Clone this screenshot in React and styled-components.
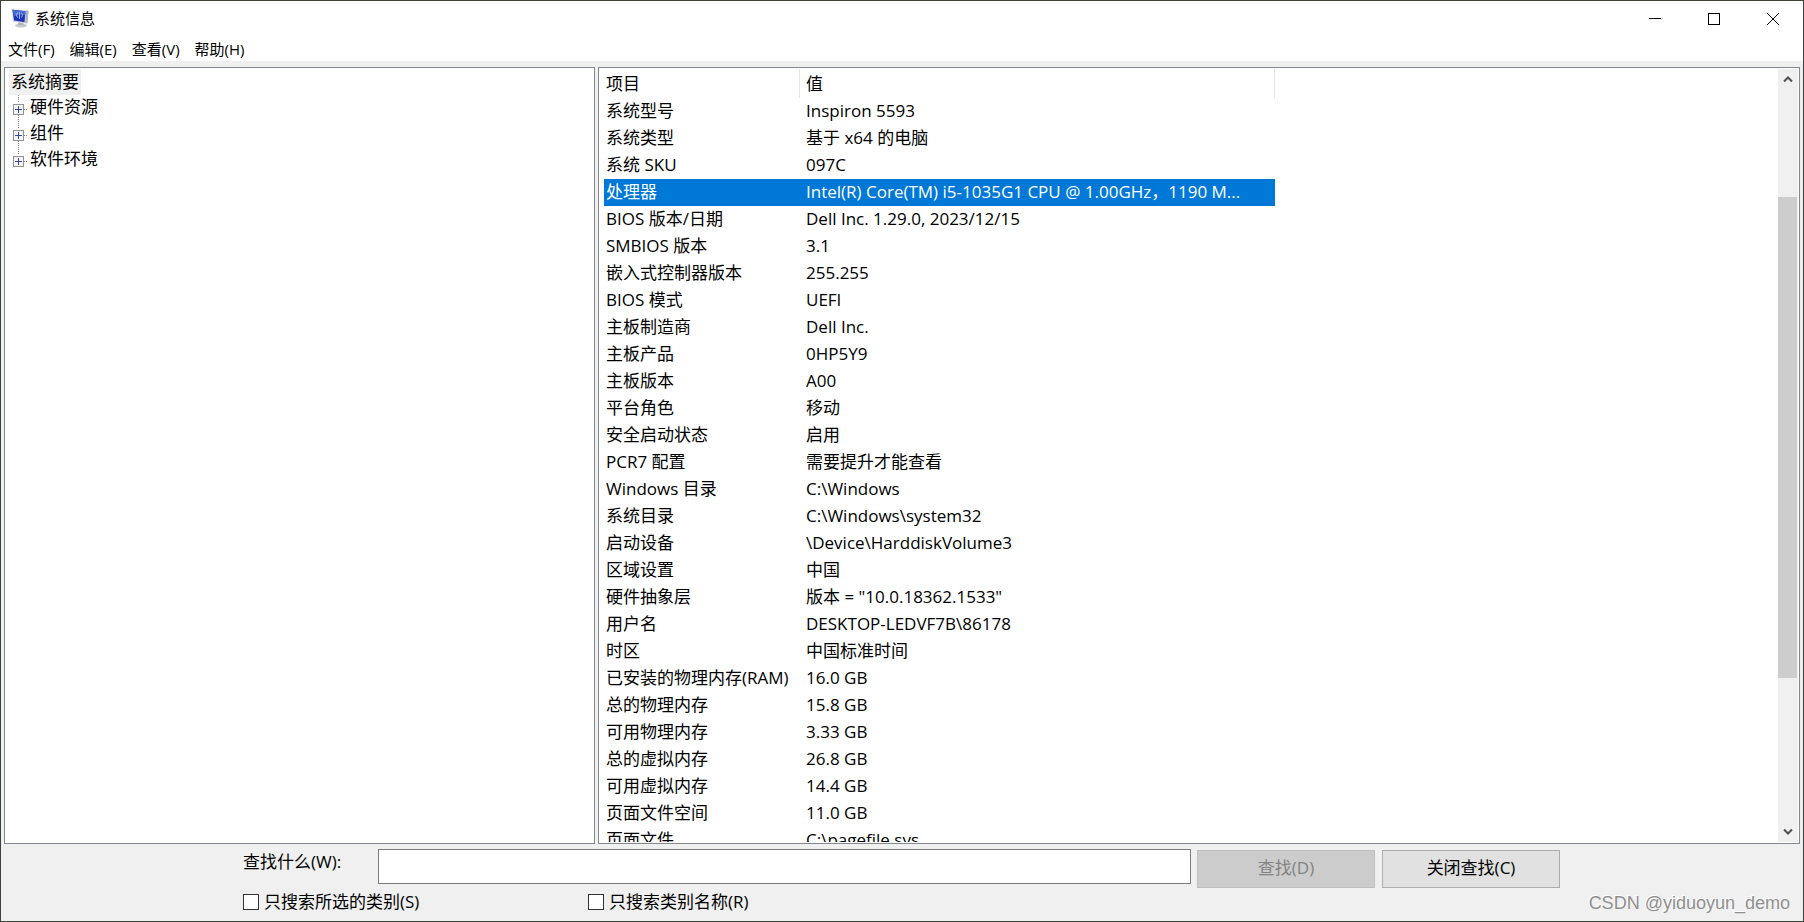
import React from "react";
import styled, { createGlobalStyle } from "styled-components";

const GlobalStyle = createGlobalStyle`
  * {
    box-sizing: border-box;
  }

  body {
    margin: 0;
  }

  body,
  button,
  input {
    font-family: "Open Sans", "Noto Sans CJK SC", sans-serif;
    font-size: 17px;
    color: #000;
  }
`;

const Window = styled.div`
  display: flex;
  flex-direction: column;
  height: 100vh;
  overflow: hidden;
  border: 1px solid #3c4238;
  background: #f0f0f0;
`;

const TitleBar = styled.header`
  display: flex;
  align-items: center;
  justify-content: space-between;
  height: 36px;
  padding: 0 1px 0 9px;
  background: #fff;
`;

const Title = styled.h1`
  display: flex;
  align-items: center;
  gap: 5px;
  margin: 0;
  padding-bottom: 2px;
  font-size: 15px;
  font-weight: 400;
  line-height: 20px;
`;

const WindowButtons = styled.div`
  display: flex;
  height: 100%;
`;

const WindowButton = styled.button`
  display: flex;
  align-items: center;
  justify-content: center;
  width: 59px;
  padding: 0;
  border: none;
  background: none;
`;

const MenuBar = styled.nav`
  display: flex;
  gap: 15px;
  height: 24px;
  padding-left: 7px;
  background: #fff;
`;

const MenuItem = styled.button`
  padding: 0;
  border: none;
  background: none;
  font-size: 15px;
  line-height: 24px;
`;

const Panes = styled.main`
  display: grid;
  grid-template-columns: 591px minmax(0, 1fr);
  gap: 3px;
  flex: 1;
  min-height: 0;
  padding: 6px 3px 0;
`;

const TreePane = styled.section`
  border: 1px solid #828790;
  background: #fff;
  padding: 1px 4px;
`;

const TreeRoot = styled.div`
  display: inline-block;
  padding: 0 2px;
  background: #f0f0f0;
  line-height: 26px;
  vertical-align: top;
`;

const TreeList = styled.ul`
  margin: 0;
  padding: 0;
  list-style: none;
`;

const TreeItem = styled.li`
  display: flex;
  align-items: flex-start;
  gap: 1px;
  height: 26px;
  padding-left: 4px;
  line-height: 24px;
`;

const Expander = styled.button`
  display: flex;
  padding: 0;
  border: none;
  background: none;
`;

const DetailPane = styled.section`
  display: flex;
  justify-content: space-between;
  min-height: 0;
  overflow: hidden;
  border: 1px solid #828790;
  background: #fff;
  padding: 1px 1px 1px 5px;
`;

const TableArea = styled.div`
  min-width: 0;
  overflow: hidden;
`;

const Table = styled.table`
  width: 671px;
  table-layout: fixed;
  border-collapse: separate;
  border-spacing: 0;
`;

const HeadCell = styled.th`
  width: ${(props) => (props.$first ? "196px" : "auto")};
  height: 29px;
  padding: 0 0 0 ${(props) => (props.$first ? "2px" : "6px")};
  border-right: 1px solid #e5e5e5;
  font-weight: 400;
  line-height: 29px;
  text-align: left;
`;

const Row = styled.tr`
  background: ${(props) => (props.$selected ? "#0078d7" : "#fff")};
  color: ${(props) => (props.$selected ? "#fff" : "#000")};
`;

const Cell = styled.td`
  height: 27px;
  padding: 0 0 0 2px;
  line-height: 25px;
  vertical-align: top;
  white-space: nowrap;

  & + & {
    padding-left: 6px;
  }
`;

const ScrollBar = styled.div`
  display: flex;
  flex-direction: column;
  flex-shrink: 0;
  width: 20px;
  background: #f0f0f0;
`;

const ScrollButton = styled.button`
  display: flex;
  align-items: center;
  justify-content: center;
  height: 20px;
  padding: 0;
  border: none;
  background: none;
`;

const ScrollTrack = styled.div`
  display: grid;
  grid-template-rows: 108fr 482fr 144fr;
  flex: 1;
`;

const ScrollThumb = styled.div`
  grid-row: 2;
  margin-right: 1px;
  background: #cdcdcd;
`;

const FindForm = styled.form`
  display: flex;
  flex-direction: column;
  gap: 5px;
  height: 77px;
  padding: 5px 243px 0 242px;
`;

const FindRow = styled.div`
  display: flex;
  align-items: flex-start;
`;

const FindLabel = styled.label`
  width: 135px;
  line-height: 26px;
`;

const FindInput = styled.input`
  flex: 1;
  min-width: 0;
  height: 35px;
  margin-right: 6px;
  padding: 0 6px;
  border: 1px solid #7a7a7a;
  background: #fff;
`;

const FindButton = styled.button`
  width: 178px;
  height: 38px;
  margin-top: 1px;
  padding: 0 0 2px;
  border: 1px solid #adadad;
  background: #e1e1e1;
  line-height: 34px;

  & + & {
    margin-left: 7px;
  }

  &:disabled {
    border-color: #bfbfbf;
    background: #cccccc;
    color: #838383;
  }
`;

const CheckLabel = styled.label`
  display: flex;
  align-items: center;
  gap: 5px;
  width: 345px;
  line-height: 18px;
`;

const CheckBox = styled.input`
  appearance: none;
  width: 16px;
  height: 16px;
  margin: 0;
  border: 1px solid #333;
  background: #fff;
`;

const Watermark = styled.div`
  position: absolute;
  right: 14px;
  bottom: 7px;
  color: #8f8f8f;
  font-family: "Liberation Sans", sans-serif;
  font-size: 18px;
  line-height: 24px;
  text-shadow: -1px -1px 0 #fff;
`;

const menus = ["文件(F)", "编辑(E)", "查看(V)", "帮助(H)"];

const categories = ["硬件资源", "组件", "软件环境"];

const rows = [
  ["系统型号", "Inspiron 5593"],
  ["系统类型", "基于 x64 的电脑"],
  ["系统 SKU", "097C"],
  ["处理器", "Intel(R) Core(TM) i5-1035G1 CPU @ 1.00GHz，1190 M..."],
  ["BIOS 版本/日期", "Dell Inc. 1.29.0, 2023/12/15"],
  ["SMBIOS 版本", "3.1"],
  ["嵌入式控制器版本", "255.255"],
  ["BIOS 模式", "UEFI"],
  ["主板制造商", "Dell Inc."],
  ["主板产品", "0HP5Y9"],
  ["主板版本", "A00"],
  ["平台角色", "移动"],
  ["安全启动状态", "启用"],
  ["PCR7 配置", "需要提升才能查看"],
  ["Windows 目录", "C:\\Windows"],
  ["系统目录", "C:\\Windows\\system32"],
  ["启动设备", "\\Device\\HarddiskVolume3"],
  ["区域设置", "中国"],
  ["硬件抽象层", '版本 = "10.0.18362.1533"'],
  ["用户名", "DESKTOP-LEDVF7B\\86178"],
  ["时区", "中国标准时间"],
  ["已安装的物理内存(RAM)", "16.0 GB"],
  ["总的物理内存", "15.8 GB"],
  ["可用物理内存", "3.33 GB"],
  ["总的虚拟内存", "26.8 GB"],
  ["可用虚拟内存", "14.4 GB"],
  ["页面文件空间", "11.0 GB"],
  ["页面文件", "C:\\pagefile.sys"],
];

const ComputerIcon = () => (
  <svg width="20" height="20" viewBox="0 0 20 20">
    <ellipse cx="11" cy="17.500" rx="6" ry="2" fill="#c9ccd0" />
    <path d="M8 13l5 1 1 3.500H8z" fill="#b3b7bd" />
    <path d="M1.500 1l17 1.500-1.500 13L3 14z" fill="#d5d9de" />
    <path d="M16 2.500l2.500.5-1 12-2 .5z" fill="#a9b0b8" />
    <path d="M2.500 1.800l13 1.400-1 11L4 12.500z" fill="#1c35b8" />
    <path d="M2.500 1.800l13 1.400-.4 4C11 5 7 8 3.600 8z" fill="#4868d8" />
    <path d="M9.500 4v7M7.500 4.500q-2 2.500 0 5M11.500 5q2 2 0 4.500" stroke="#9db4f2" fill="none" />
  </svg>
);

const PlusBox = ({ last }) => (
  <svg width="16" height="26" viewBox="0 0 16 26" shapeRendering="crispEdges">
    <path
      d={last ? "M5.500 0v8M11 14.500h4" : "M5.500 0v8M5.500 20v6M11 14.500h4"}
      stroke="#808080"
      strokeDasharray="1 1"
    />
    <rect x="0.500" y="9.500" width="10" height="10" fill="#f4f4f4" stroke="#919191" />
    <path d="M2 14.500h7M5.500 11v7" stroke="#33499c" />
  </svg>
);

const Chevron = ({ down }) => (
  <svg width="10" height="8" viewBox="0 0 10 8">
    <path
      d={down ? "M1 1.500l4 4 4-4" : "M1 6.500l4-4 4 4"}
      fill="none"
      stroke="#505050"
      strokeWidth="2"
    />
  </svg>
);

function App() {
  return (
    <Window>
      <GlobalStyle />
      <TitleBar>
        <Title>
          <ComputerIcon />
          系统信息
        </Title>
        <WindowButtons>
          <WindowButton type="button" aria-label="最小化">
            <svg width="12" height="12" viewBox="0 0 12 12">
              <path d="M0 5.500h12" stroke="#000" />
            </svg>
          </WindowButton>
          <WindowButton type="button" aria-label="最大化">
            <svg width="12" height="12" viewBox="0 0 12 12">
              <rect x="0.500" y="0.500" width="11" height="11" fill="none" stroke="#000" />
            </svg>
          </WindowButton>
          <WindowButton type="button" aria-label="关闭">
            <svg width="12" height="12" viewBox="0 0 12 12">
              <path d="M0 0l12 12M12 0L0 12" stroke="#000" />
            </svg>
          </WindowButton>
        </WindowButtons>
      </TitleBar>
      <MenuBar>
        {menus.map((menu) => (
          <MenuItem type="button" key={menu}>
            {menu}
          </MenuItem>
        ))}
      </MenuBar>
      <Panes>
        <TreePane>
          <TreeRoot>系统摘要</TreeRoot>
          <TreeList>
            {categories.map((name, i) => (
              <TreeItem key={name}>
                <Expander type="button" aria-label={name}>
                  <PlusBox last={i === categories.length - 1} />
                </Expander>
                {name}
              </TreeItem>
            ))}
          </TreeList>
        </TreePane>
        <DetailPane>
          <TableArea>
            <Table>
              <thead>
                <tr>
                  <HeadCell $first>项目</HeadCell>
                  <HeadCell>值</HeadCell>
                </tr>
              </thead>
              <tbody>
                {rows.map(([name, value]) => (
                  <Row key={name} $selected={name === "处理器"}>
                    <Cell>{name}</Cell>
                    <Cell>{value}</Cell>
                  </Row>
                ))}
              </tbody>
            </Table>
          </TableArea>
          <ScrollBar>
            <ScrollButton type="button" aria-label="向上滚动">
              <Chevron />
            </ScrollButton>
            <ScrollTrack>
              <ScrollThumb />
            </ScrollTrack>
            <ScrollButton type="button" aria-label="向下滚动">
              <Chevron down />
            </ScrollButton>
          </ScrollBar>
        </DetailPane>
      </Panes>
      <FindForm>
        <FindRow>
          <FindLabel htmlFor="find">查找什么(W):</FindLabel>
          <FindInput id="find" type="text" />
          <FindButton type="button" disabled>
            查找(D)
          </FindButton>
          <FindButton type="button">关闭查找(C)</FindButton>
        </FindRow>
        <FindRow>
          <CheckLabel>
            <CheckBox type="checkbox" />
            只搜索所选的类别(S)
          </CheckLabel>
          <CheckLabel>
            <CheckBox type="checkbox" />
            只搜索类别名称(R)
          </CheckLabel>
        </FindRow>
      </FindForm>
      <Watermark>CSDN @yiduoyun_demo</Watermark>
    </Window>
  );
}

export default App;
